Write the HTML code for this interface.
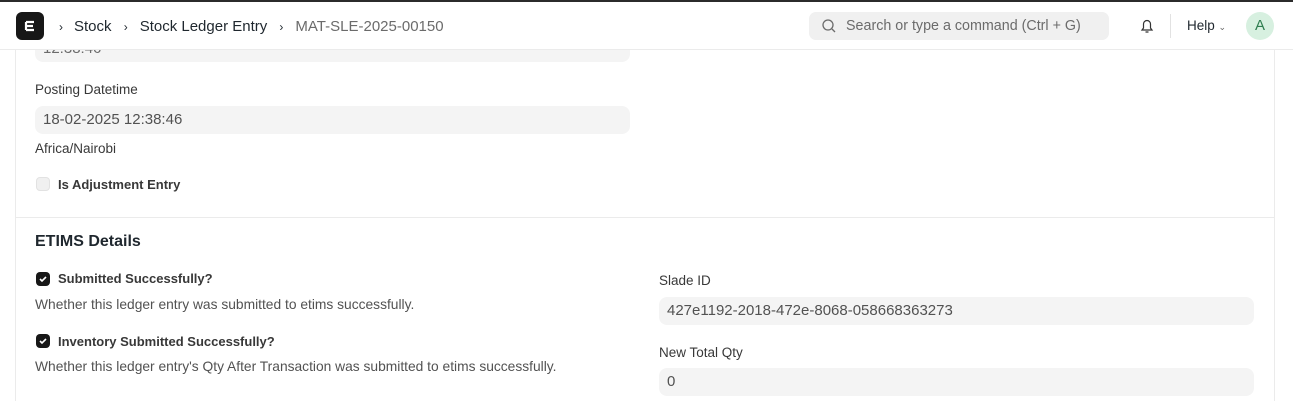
<!DOCTYPE html>
<html><head><style>
*{box-sizing:border-box;margin:0;padding:0}
body{width:1293px;height:401px;overflow:hidden;background:#fff;font-family:"Liberation Sans",sans-serif;color:#1f272e;position:relative}
.a{position:absolute}
.inp{position:absolute;background:#f4f4f4;border-radius:8px;height:28px;font-size:15px;color:#525252;padding:6px 8px;line-height:16px}
.lbl{position:absolute;font-size:13.5px;color:#383838}
.cb{position:absolute;width:14px;height:14px;border-radius:4px;background:#171717}
.cb svg{position:absolute;left:2px;top:2px}
.desc{position:absolute;font-size:13.8px;color:#525252}
.bl{position:absolute;font-size:13px;font-weight:bold;color:#383838}
</style></head><body>
<div class="a" style="left:0;top:0;width:1293px;height:2px;background:#2b2b2b"></div>
<div class="a" style="left:0;top:49px;width:1293px;height:1px;background:#ebebeb"></div>
<div class="a" style="left:16px;top:12px;width:28px;height:28px;border-radius:6px;background:#171717"></div>
<svg class="a" style="left:16px;top:12px" width="28" height="28"><path d="M10 10h8M10 14h7M10 18h8M10 10v8" stroke="#fff" stroke-width="2.2" fill="none"/></svg>
<div class="a" style="left:59px;top:18px;font-size:15px;color:#1f272e;white-space:nowrap"><span style="font-size:12px;margin-right:11px">&#8250;</span>Stock <span style="font-size:12px;margin:0 12px 0 8px">&#8250;</span>Stock Ledger Entry <span style="font-size:12px;margin:0 12px 0 8px">&#8250;</span><span style="color:#6b6b6b">MAT-SLE-2025-00150</span></div>
<div class="a" style="left:809px;top:12px;width:300px;height:28px;border-radius:7px;background:#f0f0f0"></div>
<svg class="a" style="left:821px;top:18px" width="16" height="16"><circle cx="7" cy="7" r="5" stroke="#6b6b6b" stroke-width="1.3" fill="none"/><path d="M11 11l3 3" stroke="#6b6b6b" stroke-width="1.3"/></svg>
<div class="a" style="left:846px;top:18px;font-size:14.3px;color:#6b6b6b">Search or type a command (Ctrl + G)</div>
<svg class="a" style="left:1138px;top:17px" width="18" height="18"><path d="M4 13h10l-1.5-2V7a3.5 3.5 0 0 0-7 0v4z M7.5 15h3" stroke="#333" stroke-width="1.2" fill="none"/></svg>
<div class="a" style="left:1170px;top:14px;width:1px;height:24px;background:#e2e2e2"></div>
<div class="a" style="left:1187px;top:18px;font-size:13.5px;color:#1f272e">Help <span style="font-size:9px;color:#666">&#8964;</span></div>
<div class="a" style="left:1246px;top:12px;width:28px;height:28px;border-radius:14px;background:#d7f0e0;color:#2e7d4f;font-size:15px;text-align:center;line-height:28px">A</div>
<div class="a" style="left:15px;top:50px;width:1px;height:351px;background:#ebebeb"></div>
<div class="a" style="left:1274px;top:50px;width:1px;height:351px;background:#ebebeb"></div>
<div class="a" style="left:35px;top:50px;width:595px;height:12px;border-radius:0 0 8px 8px;background:#f4f4f4;overflow:hidden"><div style="position:absolute;left:8px;top:-10px;font-size:15px;color:#6b6b6b">12:38:46</div></div>
<div class="lbl" style="left:35px;top:82px">Posting Datetime</div>
<div class="inp" style="left:35px;top:106px;width:595px">18-02-2025 12:38:46</div>
<div class="lbl" style="left:35px;top:141px">Africa/Nairobi</div>
<div class="a" style="left:36px;top:177px;width:14px;height:14px;border-radius:4px;background:#f0f0f0;border:1px solid #e2e2e2"></div>
<div class="bl" style="left:58px;top:177px">Is Adjustment Entry</div>
<div class="a" style="left:16px;top:217px;width:1258px;height:1px;background:#ebebeb"></div>
<div class="a" style="left:35px;top:233px;font-size:16px;font-weight:bold;color:#1f272e">ETIMS Details</div>
<div class="cb" style="left:36px;top:272px"><svg width="10" height="10"><path d="M2 5l2 2 4-4" stroke="#fff" stroke-width="1.6" fill="none"/></svg></div>
<div class="bl" style="left:58px;top:271px">Submitted Successfully?</div>
<div class="desc" style="left:35px;top:297px">Whether this ledger entry was submitted to etims successfully.</div>
<div class="cb" style="left:36px;top:334px"><svg width="10" height="10"><path d="M2 5l2 2 4-4" stroke="#fff" stroke-width="1.6" fill="none"/></svg></div>
<div class="bl" style="left:58px;top:334px">Inventory Submitted Successfully?</div>
<div class="desc" style="left:35px;top:359px">Whether this ledger entry's Qty After Transaction was submitted to etims successfully.</div>
<div class="lbl" style="left:659px;top:273px">Slade ID</div>
<div class="inp" style="left:659px;top:297px;width:595px">427e1192-2018-472e-8068-058668363273</div>
<div class="lbl" style="left:659px;top:345px">New Total Qty</div>
<div class="inp" style="left:659px;top:368px;width:595px">0</div>
</body></html>
